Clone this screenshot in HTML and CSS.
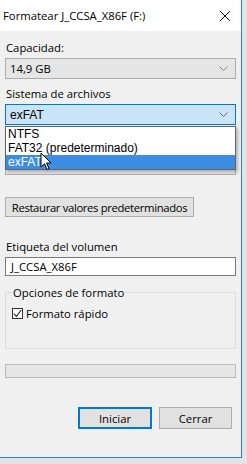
FILE: index.html
```html
<!DOCTYPE html>
<html lang="es">
<head>
<meta charset="utf-8">
<title>Formatear</title>
<link rel="stylesheet" href="styles.css">
</head>
<body>
<div class="window">
  <div class="titlebar">
    <span class="title">Formatear J_CCSA_X86F (F:)</span>
    <svg class="close" width="12" height="12" viewBox="0 0 12 12"><path d="M1 1 L11 11 M11 1 L1 11" stroke="#111" stroke-width="1" fill="none"/></svg>
  </div>
  <div class="content">
    <div class="label first">Capacidad:</div>
    <div class="combo readonly"><span>14,9 GB</span><svg class="chev" width="9" height="5" viewBox="0 0 9 5"><path d="M0.5 0.5 L4.5 4.5 L8.5 0.5" stroke="#8a8a8a" fill="none"/></svg></div>

    <div class="label second">Sistema de archivos</div>
    <div class="combo-wrap">
      <div class="combo focused"><span class="alt">exFAT</span><svg class="chev" width="9" height="5" viewBox="0 0 9 5"><path d="M0.5 0.5 L4.5 4.5 L8.5 0.5" stroke="#6a6a6a" fill="none"/></svg></div>
      <ul class="list">
        <li>NTFS</li>
        <li>FAT32 (predeterminado)</li>
        <li class="sel">exFAT</li>
      </ul>
      <svg class="cursor" width="14" height="20" viewBox="0 0 14 20"><path d="M1 1 L1 15 L4.5 11.8 L7 17.5 L9 16.6 L6.6 11 L11 11 Z" fill="#fff" stroke="#000" stroke-width="1" stroke-linejoin="miter"/></svg>
    </div>

    <div class="spacer"></div>
    <div class="combo readonly"></div>

    <button class="btn restore">Restaurar valores predeterminados</button>

    <div class="label vol">Etiqueta del volumen</div>
    <div class="input">J_CCSA_X86F</div>

    <fieldset class="group">
      <legend>Opciones de formato</legend>
      <label class="check"><span class="box"><svg width="9" height="9" viewBox="0 0 9 9"><path d="M0.8 4.5 L3.3 7.3 L8.3 1" stroke="#222" stroke-width="1.1" fill="none"/></svg></span>Formato rápido</label>
    </fieldset>

    <div class="progress"></div>

    <div class="actions">
      <button class="btn main">Iniciar</button>
      <button class="btn close-btn">Cerrar</button>
    </div>
  </div>
</div>
</body>
</html>
```
FILE: styles.css
```css
html, body {
  margin: 0;
  padding: 0;
}
body {
  width: 247px;
  height: 464px;
  background: #e4e4e4;
  font-family: "Open Sans", "Noto Sans", sans-serif;
  font-size: 11.3px;
  color: #000;
  overflow: hidden;
}
.window {
  width: 241px;
  height: 457px;
  background: #f0f0f0;
  border-right: 1px solid #1c86d8;
  border-bottom: 1px solid #1c86d8;
  display: flex;
  flex-direction: column;
}
.titlebar {
  height: 31px;
  background: #fff;
  display: flex;
  align-items: center;
  padding-left: 3px;
  padding-right: 10px;
  justify-content: space-between;
  flex: none;
}
.title {
  font-size: 11.3px;
  color: #000;
}
.content {
  padding: 0 5px;
  display: flex;
  flex-direction: column;
}
.label {
  height: 15px;
  line-height: 15px;
  margin-top: 7px;
  margin-bottom: 3px;
  padding-left: 1px;
  white-space: nowrap;
}
.label.first { margin-top: 9px; }
.combo {
  height: 21px;
  box-sizing: border-box;
  border: 1px solid #adadad;
  background: #e5e5e5;
  display: flex;
  align-items: center;
  justify-content: space-between;
  padding: 0 7px 0 4px;
  flex: none;
}
.combo.focused {
  background: #cce4f7;
  border-color: #0078d7;
}
.alt {
  font-family: "Liberation Sans", Arial, sans-serif;
  font-size: 12px;
}
.combo-wrap {
  position: relative;
}
.list {
  position: absolute;
  left: 0;
  right: 0;
  top: 22px;
  margin: 0;
  padding: 0;
  list-style: none;
  background: #fff;
  border: 1px solid #646464;
  box-shadow: 2px 2px 3px rgba(0,0,0,0.25);
  font-family: "Liberation Sans", Arial, sans-serif;
  font-size: 12px;
  z-index: 2;
}
.list li {
  height: 14px;
  line-height: 14px;
  padding-left: 2px;
}
.list li.sel {
  background: #3c8ee5;
  color: #fff;
}
.cursor {
  position: absolute;
  left: 35px;
  top: 48px;
  z-index: 3;
}
.spacer {
  height: 29px;
  flex: none;
}
.btn {
  font-family: inherit;
  font-size: 11.3px;
  color: #000;
  background: #e1e1e1;
  border: 1px solid #adadad;
  height: 21px;
  padding: 0;
  box-sizing: border-box;
  white-space: nowrap;
}
.restore {
  margin-top: 22px;
  width: 189px;
  height: 20px;
  align-self: flex-start;
  letter-spacing: -0.35px;
}
.label.vol { margin-top: 22px; }
.input {
  height: 19px;
  box-sizing: border-box;
  border: 1px solid #7a7a7a;
  background: #fff;
  padding-left: 5px;
  line-height: 17px;
}
.group {
  margin: 9px 0 0 0;
  padding: 0 0 0 6px;
  border: 1px solid #dcdcdc;
  height: 64px;
  box-sizing: border-box;
  min-width: 0;
}
.group legend {
  padding: 0 1px;
  line-height: 15px;
}
.check {
  display: flex;
  align-items: center;
  margin-top: 6px;
  gap: 3px;
  line-height: 15px;
}
.box {
  width: 11px;
  height: 11px;
  box-sizing: border-box;
  border: 1px solid #333;
  background: #fff;
  display: flex;
  align-items: center;
  justify-content: center;
}
.progress {
  margin-top: 15px;
  height: 14px;
  box-sizing: border-box;
  border: 1px solid #bcbcbc;
  background: #e6e6e6;
  flex: none;
}
.actions {
  margin-top: 29px;
  display: flex;
  justify-content: flex-end;
  gap: 7px;
  padding-right: 4px;
}
.actions .btn {
  width: 73px;
  height: 22px;
}
.actions .main {
  width: 74px;
  border: 2px solid #0078d7;
}
```
